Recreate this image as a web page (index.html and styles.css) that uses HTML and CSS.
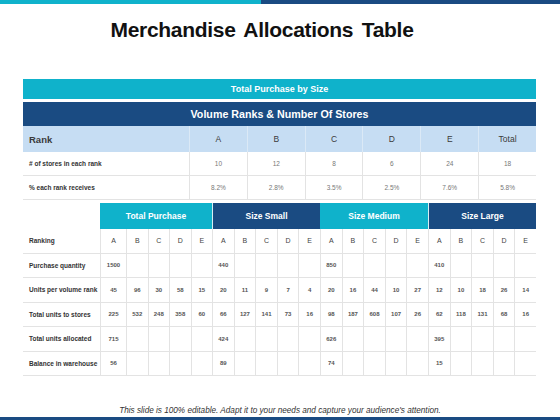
FILE: index.html
```html
<!DOCTYPE html>
<html>
<head>
<meta charset="utf-8">
<link rel="stylesheet" href="styles.css">
</head>
<body>
<div class="page">
  <div class="topbar"><div class="tb-teal"></div><div class="tb-navy"></div></div>
  <h1 class="title">Merchandise Allocations Table</h1>
  <div class="content">
    <div class="bar-teal">Total Purchase by Size</div>
    <div class="bar-navy">Volume Ranks &amp; Number Of Stores</div>
    <div class="t1">
      <div class="h lab">Rank</div><div class="h">A</div><div class="h">B</div><div class="h">C</div><div class="h">D</div><div class="h">E</div><div class="h last">Total</div>
      <div class="c lab">
# of stores in each rank</div><div class="c">10</div><div class="c">12</div><div class="c">8</div><div class="c">6</div><div class="c">24</div><div class="c last">18</div>
      <div class="c lab">% each rank receives</div><div class="c">8.2%</div><div class="c">2.8%</div><div class="c">3.5%</div><div class="c">2.5%</div><div class="c">7.6%</div><div class="c last">5.8%</div>
    </div>
    <div class="t2">
      <div class="g empty"></div>
      <div class="g teal">Total Purchase</div>
      <div class="g navy">Size Small</div>
      <div class="g teal">Size Medium</div>
      <div class="g navy">Size Large</div>

      <div class="c lab">Ranking</div>
      <div class="c l">A</div><div class="c l">B</div><div class="c l">C</div><div class="c l">D</div><div class="c l">E</div>
      <div class="c l">A</div><div class="c l">B</div><div class="c l">C</div><div class="c l">D</div><div class="c l">E</div>
      <div class="c l">A</div><div class="c l">B</div><div class="c l">C</div><div class="c l">D</div><div class="c l">E</div>
      <div class="c l">A</div><div class="c l">B</div><div class="c l">C</div><div class="c l">D</div><div class="c l last">E</div>

      <div class="c lab">Purchase quantity</div>
      <div class="c">1500</div><div class="c"></div><div class="c"></div><div class="c"></div><div class="c"></div>
      <div class="c">440</div><div class="c"></div><div class="c"></div><div class="c"></div><div class="c"></div>
      <div class="c">850</div><div class="c"></div><div class="c"></div><div class="c"></div><div class="c"></div>
      <div class="c">410</div><div class="c"></div><div class="c"></div><div class="c"></div><div class="c last"></div>

      <div class="c lab">Units per volume rank</div>
      <div class="c">45</div><div class="c">96</div><div class="c">30</div><div class="c">58</div><div class="c">15</div>
      <div class="c">20</div><div class="c">11</div><div class="c">9</div><div class="c">7</div><div class="c">4</div>
      <div class="c">20</div><div class="c">16</div><div class="c">44</div><div class="c">10</div><div class="c">27</div>
      <div class="c">12</div><div class="c">10</div><div class="c">18</div><div class="c">26</div><div class="c last">14</div>

      <div class="c lab">Total units to stores</div>
      <div class="c">225</div><div class="c">532</div><div class="c">248</div><div class="c">358</div><div class="c">60</div>
      <div class="c">66</div><div class="c">127</div><div class="c">141</div><div class="c">73</div><div class="c">16</div>
      <div class="c">98</div><div class="c">187</div><div class="c">608</div><div class="c">107</div><div class="c">26</div>
      <div class="c">62</div><div class="c">118</div><div class="c">131</div><div class="c">68</div><div class="c last">16</div>

      <div class="c lab">Total units allocated</div>
      <div class="c">715</div><div class="c"></div><div class="c"></div><div class="c"></div><div class="c"></div>
      <div class="c">424</div><div class="c"></div><div class="c"></div><div class="c"></div><div class="c"></div>
      <div class="c">626</div><div class="c"></div><div class="c"></div><div class="c"></div><div class="c"></div>
      <div class="c">395</div><div class="c"></div><div class="c"></div><div class="c"></div><div class="c last"></div>

      <div class="c lab">Balance in warehouse</div>
      <div class="c">56</div><div class="c"></div><div class="c"></div><div class="c"></div><div class="c"></div>
      <div class="c">89</div><div class="c"></div><div class="c"></div><div class="c"></div><div class="c"></div>
      <div class="c">74</div><div class="c"></div><div class="c"></div><div class="c"></div><div class="c"></div>
      <div class="c">15</div><div class="c"></div><div class="c"></div><div class="c"></div><div class="c last"></div>
    </div>
  </div>
  <p class="note">This slide is 100% editable. Adapt it to your needs and capture your audience's attention.</p>
  <div class="bottombar"></div>
</div>
</body>
</html>
```

FILE: styles.css
```css
* { box-sizing: border-box; }
html, body { margin: 0; padding: 0; background: #fff; }
body { font-family: "Liberation Sans", Arial, sans-serif; }
.page { width: 560px; height: 420px; display: flex; flex-direction: column; overflow: hidden; }

.topbar { display: flex; height: 4px; flex: none; }
.tb-teal { width: 261px; background: #0fb2cb; }
.tb-navy { flex: 1; background: #1a4b82; }

.title {
  margin: 15px 36px 0 0;
  height: 22px;
  line-height: 22px;
  font-size: 21px;
  font-weight: bold;
  text-align: center;
  color: #111;
  word-spacing: 3px;
  letter-spacing: -0.3px;
}

.content { margin: 38px 24px 0 23px; }

.bar-teal {
  height: 20px;
  background: #0fb2cb;
  color: #fff;
  font-weight: bold;
  font-size: 9px;
  line-height: 20px;
  text-align: center;
  margin-bottom: 3px;
}
.bar-navy {
  height: 24px;
  background: #1a4b82;
  color: #fff;
  font-weight: bold;
  font-size: 10.7px;
  line-height: 24px;
  text-align: center;
}

.t1 {
  display: grid;
  grid-template-columns: 166px repeat(6, 1fr);
  grid-template-rows: 26px 24px 24px;
}
.t1 .h {
  background: #c6ddf3;
  border-left: 1px solid #dbe9f6;
  color: #3a3a3a;
  font-size: 8.5px;
  display: flex; align-items: center; justify-content: center;
}
.t1 .h.lab {
  border-left: none;
  justify-content: flex-start;
  padding-left: 6px;
  font-weight: bold;
  font-size: 9.5px;
}
.t1 .c {
  border-left: 1px solid #e3e3e3;
  border-bottom: 1px solid #e3e3e3;
  color: #777;
  font-size: 6.5px;
  display: flex; align-items: center; justify-content: center;
}
.t1 .c.lab {
  border-left: none;
  justify-content: flex-start;
  padding-left: 6px;
  color: #333;
  font-weight: bold;
}

.t2 {
  margin-top: 3px;
  display: grid;
  grid-template-columns: 77px 26px repeat(4, 21.5px) repeat(15, 1fr);
  grid-template-rows: 26px repeat(6, 24.5px);
}
.t2 .g {
  grid-column: span 5;
  color: #fff;
  font-weight: bold;
  font-size: 8.5px;
  display: flex; align-items: center; justify-content: center;
  border-left: 1px solid #d8eef3;
}
.t2 .g.empty { grid-column: span 1; border-left: none; }
.t2 .g.teal { background: #0fb2cb; border-left: none; }
.t2 .g.navy { background: #1a4b82; }
.t2 .c {
  border-left: 1px solid #e3e3e3;
  border-bottom: 1px solid #e3e3e3;
  color: #555;
  font-size: 6px;
  font-weight: bold;
  display: flex; align-items: center; justify-content: center;
}
.t2 .c.l { font-weight: normal; font-size: 7px; color: #444; }
.t2 .c.lab {
  border-left: none;
  justify-content: flex-start;
  padding-left: 6px;
  color: #333;
  font-size: 6.5px;
}

.note {
  margin: auto 0 1px 0;
  text-align: center;
  font-style: italic;
  font-size: 8.2px;
  line-height: 10px;
  color: #333;
}
.bottombar { height: 3px; flex: none; background: #1a4b82; }
```
